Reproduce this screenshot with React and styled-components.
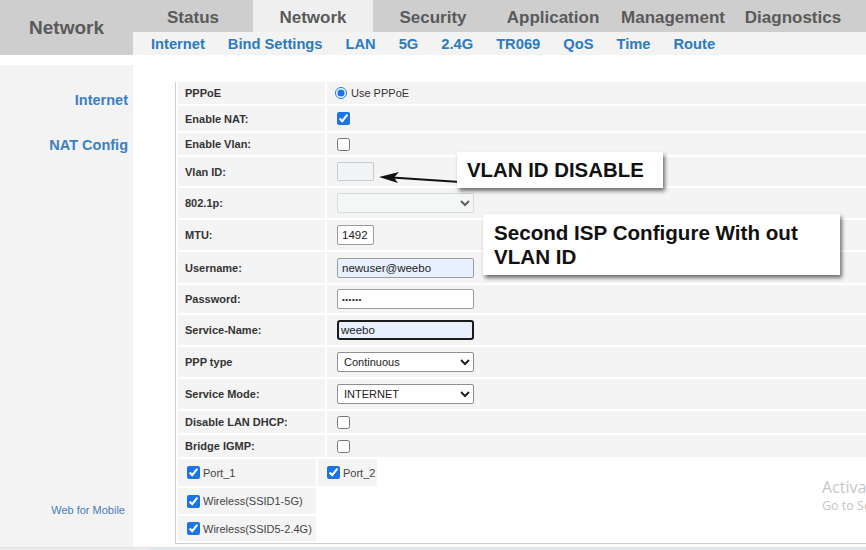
import React from "react";
import styled, { createGlobalStyle } from "styled-components";

const Global = createGlobalStyle`
  html, body { margin: 0; padding: 0; background: #fff; overflow: hidden; }
  body { width: 866px; height: 550px; font-family: "Liberation Sans", Arial, sans-serif; }
  * { box-sizing: border-box; }
`;

const Page = styled.div`
  position: relative;
  width: 866px;
  height: 550px;
  overflow: hidden;
  display: flex;
  flex-direction: column;
  background: #fff;
`;

const Header = styled.header`
  display: flex;
  height: 55px;
  flex: none;
`;

const Brand = styled.div`
  width: 133px;
  flex: none;
  background: #cecece;
  display: flex;
  align-items: center;
  justify-content: center;
  padding-top: 1px;
  font-weight: bold;
  font-size: 19px;
  color: #5a5a5a;
`;

const HeaderRight = styled.div`
  flex: 1;
  display: flex;
  flex-direction: column;
`;

const TabBar = styled.nav`
  height: 32px;
  display: flex;
  background: #cecece;
`;

const Tab = styled.div`
  width: 120px;
  flex: none;
  display: flex;
  align-items: center;
  justify-content: center;
  padding-top: 3px;
  font-weight: bold;
  font-size: 17px;
  color: #5a5a5a;
  background: ${(p) => (p.$active ? "#efefef" : "transparent")};
`;

const SubBar = styled.nav`
  flex: 1;
  background: #f3f3f3;
  display: flex;
  align-items: center;
  gap: 23px;
  padding-left: 18px;
`;

const SubLink = styled.span`
  font-weight: bold;
  font-size: 14.7px;
  color: #2a7bbf;
`;

const Body = styled.div`
  display: flex;
  height: 482px;
  margin-top: 10px;
  flex: none;
`;

const Sidebar = styled.aside`
  width: 133px;
  flex: none;
  background: #f3f3f4;
  display: flex;
  flex-direction: column;
  align-items: flex-end;
  padding: 27px 5px 30px 0;
  gap: 29px;
`;

const SideLink = styled.span`
  font-weight: bold;
  font-size: 14.5px;
  line-height: 16px;
  color: #3a80c2;
`;

const MobileLink = styled.span`
  margin-top: auto;
  font-size: 11px;
  line-height: 14px;
  color: #4a7bb7;
  padding-right: 3px;
`;

const Main = styled.main`
  flex: 1;
  padding: 17px 0 0 42px;
`;

const Panel = styled.div`
  border-left: 1px solid #cfcfcf;
  border-bottom: 1px solid #cfcfcf;
  padding: 0 0 2px 2px;
  display: flex;
  flex-direction: column;
  gap: 2px;
`;

const Row = styled.div`
  display: grid;
  grid-template-columns: 147px 1fr;
  gap: 2px;
  height: ${(p) => p.$h}px;
`;

const Label = styled.div`
  background: #f4f4f4;
  display: flex;
  align-items: center;
  padding-left: 7px;
  font-weight: bold;
  font-size: 11px;
  color: #333;
`;

const Value = styled.div`
  background: #f4f4f4;
  display: flex;
  align-items: center;
  padding-left: 10px;
  font-size: 11px;
  color: #333;
`;

const Check = styled.input.attrs({ type: "checkbox", readOnly: true })`
  width: 13px;
  height: 13px;
  margin: 0;
  accent-color: #1a73e8;
`;

const Radio = styled.input.attrs({ type: "radio", readOnly: true })`
  width: 12px;
  height: 12px;
  margin: 0 4px 0 -2px;
  accent-color: #1a73e8;
`;

const TextBox = styled.input`
  width: ${(p) => p.$w}px;
  height: ${(p) => (p.$short ? 19 : 20)}px;
  margin: 0;
  padding: 1px 4px;
  font-family: "Liberation Sans", Arial, sans-serif;
  font-size: 11.5px;
  color: #222;
  border: 1px solid #9c9c9c;
  border-radius: 2px;
  background: ${(p) => p.$bg || "#fff"};
  &:disabled {
    background: #f2f4f5;
    border-color: #c4ccd4;
  }
  &[type="password"] {
    font-size: 8px;
    letter-spacing: 0.5px;
  }
`;

const FocusBox = styled(TextBox)`
  border: 2px solid #1b1b1b;
  border-radius: 3px;
  padding: 0 2px;
  text-decoration: underline wavy #e04040;
  text-decoration-thickness: 1px;
  text-underline-offset: 2px;
`;

const Select = styled.select`
  width: 137px;
  height: 20px;
  margin: 0;
  padding: 0 2px;
  font-family: "Liberation Sans", Arial, sans-serif;
  font-size: 11px;
  color: #222;
  border: 1px solid #8f8f8f;
  border-radius: 2px;
  background: #fff;
  &:disabled {
    background: #f6f7f8;
    border-color: #c8d0d8;
  }
`;

const PortRow = styled.div`
  display: grid;
  grid-template-columns: 138px 59px;
  gap: 2px;
  height: ${(p) => p.$h}px;
`;

const PortCell = styled.label`
  background: #f4f4f4;
  display: flex;
  align-items: center;
  gap: 3px;
  padding-left: 9px;
  font-size: 11px;
  color: #444;
`;

const Footer = styled.div`
  flex: 1;
  display: grid;
  grid-template-columns: 148px 1fr;
  border-top: 1px solid #e2e2e2;
`;

const FooterSeg = styled.div`
  background: ${(p) => p.$c};
`;

const Callout = styled.div`
  position: absolute;
  left: ${(p) => p.$x}px;
  top: ${(p) => p.$y}px;
  width: ${(p) => p.$w}px;
  height: ${(p) => p.$h}px;
  background: #fff;
  box-shadow: 2px 3px 4px rgba(0, 0, 0, 0.55);
  padding: ${(p) => p.$pad};
  font-weight: bold;
  font-size: ${(p) => p.$fs}px;
  line-height: 24px;
  color: #111;
`;

const ArrowSvg = styled.svg`
  position: absolute;
  left: 370px;
  top: 165px;
`;

const Watermark = styled.div`
  position: absolute;
  left: 822px;
  top: 477px;
  font-family: "Open Sans", "Noto Sans", sans-serif;
  color: #c6c6c6;
  white-space: nowrap;
  line-height: 1.3;
`;

const WmTitle = styled.div`
  font-size: 16px;
`;

const WmSub = styled.div`
  font-size: 12.5px;
`;

const tabs = ["Status", "Network", "Security", "Application", "Management", "Diagnostics"];
const subs = ["Internet", "Bind Settings", "LAN", "5G", "2.4G", "TR069", "QoS", "Time", "Route"];

export default function App() {
  return (
    <Page>
      <Global />
      <Header>
        <Brand>Network</Brand>
        <HeaderRight>
          <TabBar>
            {tabs.map((t) => (
              <Tab key={t} $active={t === "Network"}>
                {t}
              </Tab>
            ))}
          </TabBar>
          <SubBar>
            {subs.map((s) => (
              <SubLink key={s}>{s}</SubLink>
            ))}
          </SubBar>
        </HeaderRight>
      </Header>

      <Body>
        <Sidebar>
          <SideLink>Internet</SideLink>
          <SideLink>NAT Config</SideLink>
          <MobileLink>Web for Mobile</MobileLink>
        </Sidebar>
        <Main>
          <Panel>
            <Row $h={22}>
              <Label>PPPoE</Label>
              <Value>
                <Radio checked name="mode" />
                Use PPPoE
              </Value>
            </Row>
            <Row $h={25}>
              <Label>Enable NAT:</Label>
              <Value>
                <Check checked />
              </Value>
            </Row>
            <Row $h={22}>
              <Label>Enable Vlan:</Label>
              <Value>
                <Check />
              </Value>
            </Row>
            <Row $h={29}>
              <Label>Vlan ID:</Label>
              <Value>
                <TextBox $w={37} $short disabled defaultValue="" />
              </Value>
            </Row>
            <Row $h={30}>
              <Label>802.1p:</Label>
              <Value>
                <Select disabled defaultValue="">
                  <option value=""></option>
                </Select>
              </Value>
            </Row>
            <Row $h={30}>
              <Label>MTU:</Label>
              <Value>
                <TextBox $w={37} defaultValue="1492" />
              </Value>
            </Row>
            <Row $h={31}>
              <Label>Username:</Label>
              <Value>
                <TextBox $w={137} $bg="#e8f0fe" defaultValue="newuser@weebo" />
              </Value>
            </Row>
            <Row $h={28}>
              <Label>Password:</Label>
              <Value>
                <TextBox $w={137} type="password" defaultValue="weebo1" />
              </Value>
            </Row>
            <Row $h={30}>
              <Label>Service-Name:</Label>
              <Value>
                <FocusBox $w={137} $bg="#e8f0fe" defaultValue="weebo" />
              </Value>
            </Row>
            <Row $h={30}>
              <Label>PPP type</Label>
              <Value>
                <Select defaultValue="c">
                  <option value="c">Continuous</option>
                </Select>
              </Value>
            </Row>
            <Row $h={30}>
              <Label>Service Mode:</Label>
              <Value>
                <Select defaultValue="i">
                  <option value="i">INTERNET</option>
                </Select>
              </Value>
            </Row>
            <Row $h={22}>
              <Label>Disable LAN DHCP:</Label>
              <Value>
                <Check />
              </Value>
            </Row>
            <Row $h={22}>
              <Label>Bridge IGMP:</Label>
              <Value>
                <Check />
              </Value>
            </Row>
            <PortRow $h={27}>
              <PortCell>
                <Check checked />
                Port_1
              </PortCell>
              <PortCell>
                <Check checked />
                Port_2
              </PortCell>
            </PortRow>
            <PortRow $h={26}>
              <PortCell>
                <Check checked />
                Wireless(SSID1-5G)
              </PortCell>
            </PortRow>
            <PortRow $h={25}>
              <PortCell>
                <Check checked />
                Wireless(SSID5-2.4G)
              </PortCell>
            </PortRow>
          </Panel>
        </Main>
      </Body>

      <Footer>
        <FooterSeg $c="#ececec" />
        <FooterSeg $c="#dde9ee" />
      </Footer>

      <ArrowSvg width="95" height="25" viewBox="0 0 95 25">
        <line x1="22" y1="12.5" x2="90" y2="17" stroke="#111" strokeWidth="2.2" />
        <polygon points="9,12 29,7 24,12.6 28,18" fill="#111" />
      </ArrowSvg>

      <Callout $x={457} $y={152} $w={206} $h={36} $fs={20.4} $pad="6px 10px">
        VLAN ID DISABLE
      </Callout>
      <Callout $x={483} $y={214} $w={357} $h={61} $fs={20.6} $pad="7px 11px">
        Second ISP Configure With out
        <br />
        VLAN ID
      </Callout>

      <Watermark>
        <WmTitle>Activate Windows</WmTitle>
        <WmSub>Go to Settings to activate Windows.</WmSub>
      </Watermark>
    </Page>
  );
}
